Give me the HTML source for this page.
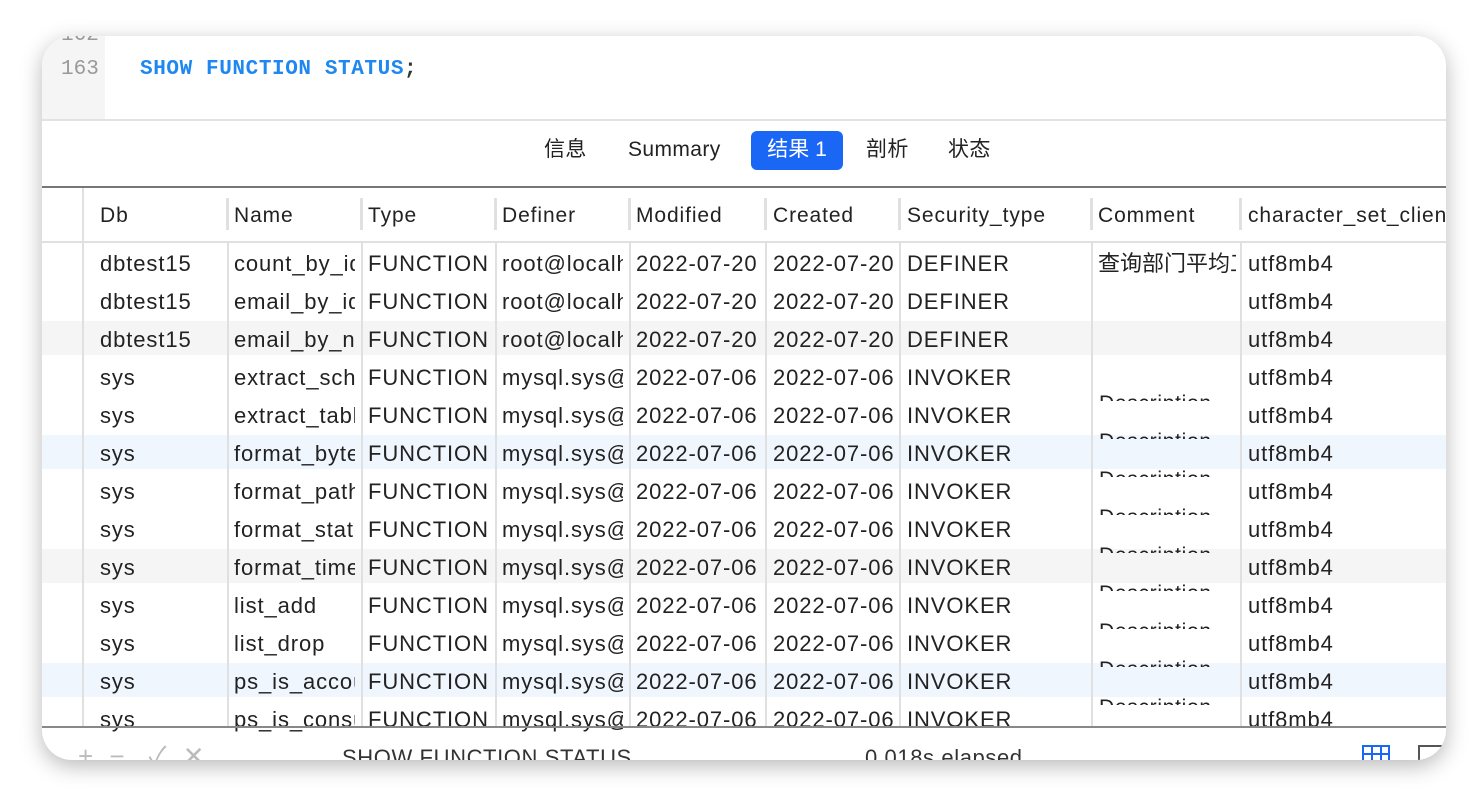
<!DOCTYPE html>
<html><head><meta charset="utf-8"><style>
*{margin:0;padding:0;box-sizing:border-box}
body{width:1482px;height:796px;background:#fff;position:relative;overflow:hidden;font-family:"Liberation Sans","Noto Sans CJK SC",sans-serif;color:#222}
.win{position:absolute;left:42px;top:36px;width:1404px;height:724px;border-radius:30px;background:#fff;overflow:hidden;box-shadow:0 6px 22px rgba(0,0,0,.28)}
.gut{position:absolute;left:0;top:0;width:63px;height:84px;background:#f5f5f5}
.ln{position:absolute;font-family:"Liberation Mono",monospace;color:#999;font-size:21px;line-height:24px}
.code{position:absolute;left:98px;top:22px;line-height:24px;font-family:"Liberation Mono",monospace;font-weight:bold;font-size:21px;letter-spacing:0.6px;color:#1e88f0}
.hl{position:absolute;left:0;width:100%;height:2px;background:#e2e2e2}
.tab{position:absolute;top:102px;font-size:21px;line-height:24px;color:#222;letter-spacing:0.4px}
.tabon{position:absolute;left:709px;top:95px;width:92px;height:39px;background:#1a66f5;border-radius:6px;color:#fff;font-size:21px;text-align:center;line-height:37px}
.hdr{position:absolute;top:168px;font-size:21px;line-height:24px;letter-spacing:0.9px;color:#222;white-space:nowrap}
.hs{position:absolute;top:162px;width:3px;height:32px;background:#e0e0e0}
.vl{position:absolute;width:2px;background:#e0e0e0}
.row{position:absolute;left:0;width:100%;height:38px}
.bg{position:absolute;left:0;top:0;width:100%;height:34px}
.c{position:absolute;top:7px;font-size:22px;line-height:24px;letter-spacing:0.9px;white-space:nowrap;overflow:hidden;color:#222}
.desc{position:absolute;left:1057px;font-size:21px;letter-spacing:0.7px;height:9px;overflow:hidden;line-height:24px;color:#222}
.foot{position:absolute;top:710px;font-size:22px;line-height:24px;letter-spacing:0.6px;color:#333;white-space:nowrap}
</style></head><body>
<div class="win">
 <div class="gut"><div class="ln" style="top:-12px;left:19px">162</div><div class="ln" style="top:22px;left:19px">163</div></div>
 <div class="code">SHOW FUNCTION STATUS<span style="color:#333">;</span></div>
 <div class="hl" style="top:83px"></div>
 <div class="tab" style="left:502px">信息</div>
 <div class="tab" style="left:586px">Summary</div>
 <div class="tabon">结果 1</div>
 <div class="tab" style="left:824px">剖析</div>
 <div class="tab" style="left:906px">状态</div>
 <div class="hl" style="top:150px;background:#777;height:1.5px"></div>
 <div class="hl" style="top:205px;height:2px;background:#e0e0e0"></div>
 <div class="hdr" style="left:58px">Db</div>
 <div class="hdr" style="left:192px">Name</div>
 <div class="hdr" style="left:326px">Type</div>
 <div class="hdr" style="left:460px">Definer</div>
 <div class="hdr" style="left:594px">Modified</div>
 <div class="hdr" style="left:731px">Created</div>
 <div class="hdr" style="left:865px">Security_type</div>
 <div class="hdr" style="left:1056px">Comment</div>
 <div class="hdr" style="left:1206px">character_set_client</div>
 <div class="hs" style="left:184px"></div><div class="hs" style="left:318px"></div><div class="hs" style="left:452px"></div><div class="hs" style="left:586px"></div><div class="hs" style="left:722px"></div><div class="hs" style="left:856px"></div><div class="hs" style="left:1048px"></div><div class="hs" style="left:1197px"></div>
 <div id="rows"></div>
 <div class="vl" style="left:40px;top:152px;height:540px"></div>
 <div class="hl" style="top:690px;background:#888;height:1.5px"></div>
 <div class="foot" style="left:36px;color:#bbb;font-size:26px;top:708px">+&nbsp;&nbsp;−&nbsp;&nbsp;&nbsp;✓&nbsp;&nbsp;✕</div>
 <div class="foot" style="left:300px">SHOW FUNCTION STATUS</div>
 <div class="foot" style="left:823px">0.018s elapsed</div>
 <div style="position:absolute;left:1320px;top:709px;width:28px;height:20px;border:2px solid #1a66f5;background:linear-gradient(#1a66f5,#1a66f5) 0 6px/100% 2px no-repeat,linear-gradient(90deg,transparent 7px,#1a66f5 7px,#1a66f5 9px,transparent 9px,transparent 16px,#1a66f5 16px,#1a66f5 18px,transparent 18px)"></div>
 <div style="position:absolute;left:1376px;top:709px;width:28px;height:20px;border:2px solid #555"></div>
</div>
<script>
var d=[["dbtest15","count_by_id","root@localhost","2022-07-20","2022-07-20","DEFINER","查询部门平均工资"],
["dbtest15","email_by_id","root@localhost","2022-07-20","2022-07-20","DEFINER",""],
["dbtest15","email_by_name","root@localhost","2022-07-20","2022-07-20","DEFINER",""],
["sys","extract_schema","mysql.sys@","2022-07-06","2022-07-06","INVOKER",""],
["sys","extract_table","mysql.sys@","2022-07-06","2022-07-06","INVOKER",""],
["sys","format_bytes","mysql.sys@","2022-07-06","2022-07-06","INVOKER",""],
["sys","format_path","mysql.sys@","2022-07-06","2022-07-06","INVOKER",""],
["sys","format_statement","mysql.sys@","2022-07-06","2022-07-06","INVOKER",""],
["sys","format_time","mysql.sys@","2022-07-06","2022-07-06","INVOKER",""],
["sys","list_add","mysql.sys@","2022-07-06","2022-07-06","INVOKER",""],
["sys","list_drop","mysql.sys@","2022-07-06","2022-07-06","INVOKER",""],
["sys","ps_is_account","mysql.sys@","2022-07-06","2022-07-06","INVOKER",""],
["sys","ps_is_consumer","mysql.sys@","2022-07-06","2022-07-06","INVOKER",""]];
var cols=[[58,120],[192,121],[326,125],[460,121],[594,124],[731,121],[865,180],[1056,138],[1206,200]];
var h="";
d.forEach(function(r,i){
 var top=209+i*38;
 var bg="";
 if(i%3==2){bg=(Math.floor(i/3)%2==0)?"#f5f5f5":"#f0f6fd";}
 var v=[r[0],r[1],"FUNCTION",r[2],r[3],r[4],r[5],r[6],"utf8mb4"];
 h+='<div class="row" style="top:'+top+'px">'+(bg?'<div class="bg" style="background:'+bg+'"></div>':'');
 v.forEach(function(t,j){h+='<div class="c" style="left:'+cols[j][0]+'px;max-width:'+cols[j][1]+'px'+(j==7?';letter-spacing:0':'')+'">'+t+'</div>';});
 h+='</div>';
 if(i>=4)h+='<div class="desc" style="top:'+(top-5)+'px">Description</div>';
});
var vls=[185,319,453,587,723,857,1049,1198];
vls.forEach(function(x){h+='<div class="vl" style="left:'+x+'px;top:207px;height:483px"></div>';});
document.getElementById("rows").innerHTML=h;
</script>
</body></html>
